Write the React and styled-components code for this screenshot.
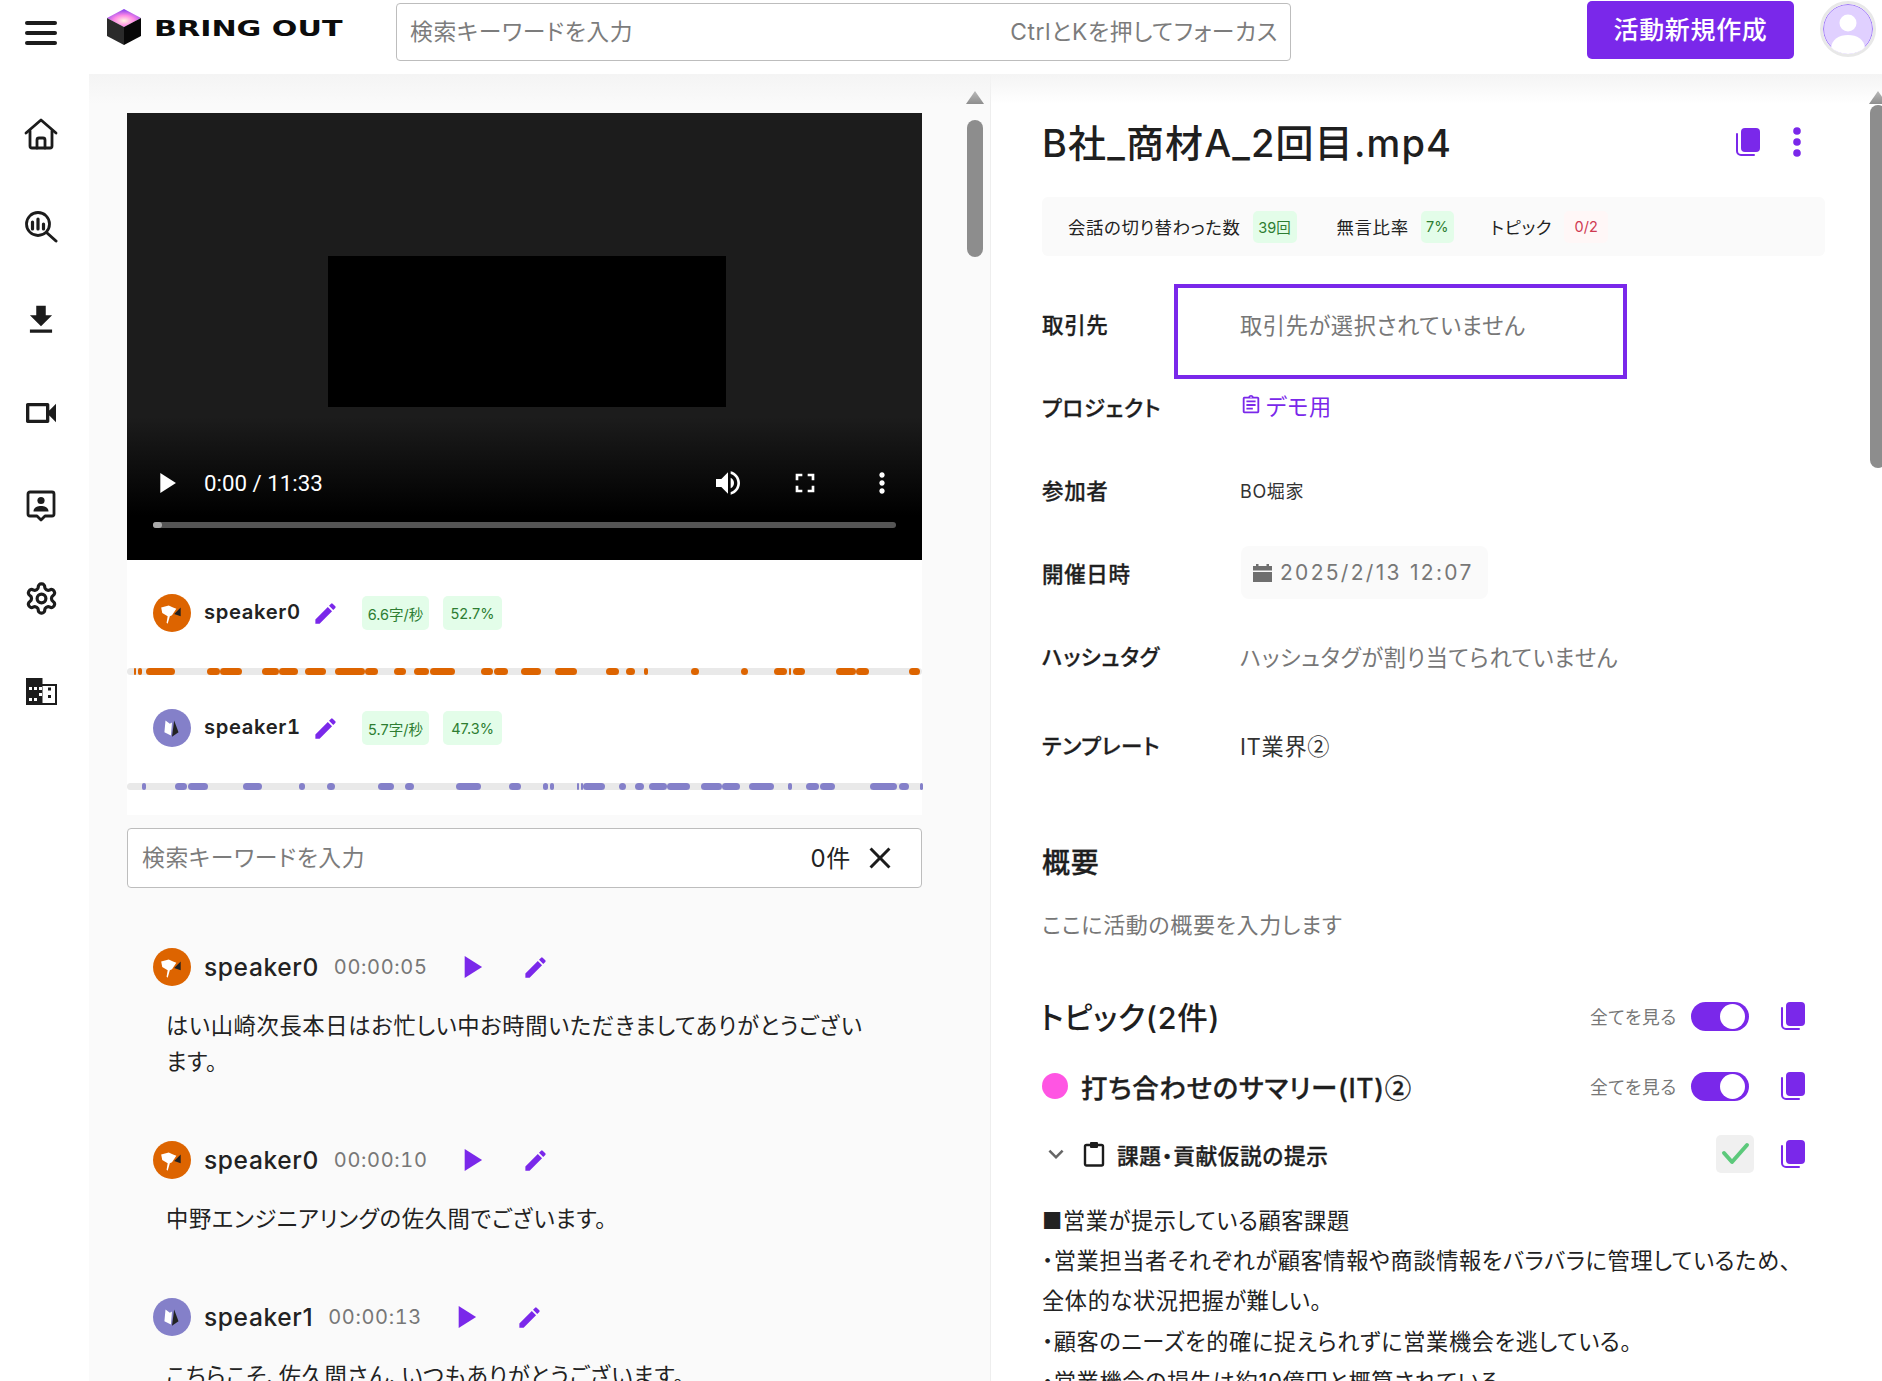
import React from "react";
import styled, { createGlobalStyle } from "styled-components";
import {
  MdDownload,
  MdOutlineVideocam,
  MdEdit,
  MdMoreVert,
  MdVolumeUp,
  MdFullscreen,
  MdPlayArrow,
  MdClose,
  MdExpandMore,
  MdOutlineAssignment,
} from "react-icons/md";
import { LuSettings } from "react-icons/lu";

const PURPLE = "#7a28ea";
const ORANGE = "#dd6400";
const VIOLET = "#8480c9";

const GlobalStyle = createGlobalStyle`
  html, body {
    margin: 0;
    padding: 0;
    background: #fff;
    overflow: hidden;
  }
  body {
    font-family: Inter, "Noto Sans CJK JP", "Noto Sans", sans-serif;
    font-feature-settings: "palt";
    letter-spacing: 0.04em;
    color: #222;
  }
  * { box-sizing: border-box; }
`;

const Shell = styled.div`
  display: flex;
  width: 1882px;
  height: 1381px;
  overflow: hidden;
`;

const Sidebar = styled.nav`
  width: 89px;
  flex: none;
  display: flex;
  flex-direction: column;
  align-items: center;
  padding: 14px 7px 0 0;
  background: #fff;
  position: relative;
  z-index: 3;
`;

const MenuButton = styled.div`
  width: 32px;
  height: 38px;
  margin-bottom: 35px;
  display: flex;
  flex-direction: column;
  justify-content: center;
  gap: 6px;
  span {
    display: block;
    height: 4px;
    border-radius: 2px;
    background: #1c1c1c;
  }
`;

const NavItem = styled.div`
  height: 93px;
  display: flex;
  align-items: center;
  justify-content: center;
  color: #1c1c1c;
  font-size: 36px;
  svg { display: block; }
`;

const Column = styled.div`
  flex: 1;
  min-width: 0;
  display: flex;
  flex-direction: column;
`;

const Header = styled.header`
  height: 74px;
  flex: none;
  display: flex;
  background: #fff;
  align-items: flex-start;
  position: relative;
`;

const Logo = styled.div`
  width: 307px;
  padding: 9px 0 0 18px;
  display: flex;
  align-items: center;
  gap: 13px;
`;

const LogoText = styled.span`
  display: inline-block;
  font-family: "DejaVu Sans", sans-serif;
  font-weight: 700;
  font-size: 22px;
  letter-spacing: 0;
  line-height: 24px;
  white-space: nowrap;
  transform: scaleX(1.37);
  transform-origin: left center;
  color: #0c0c0c;
  position: relative;
  top: 2px;
`;

const SearchBar = styled.div`
  width: 895px;
  height: 58px;
  margin-top: 3px;
  border: 1px solid #bdbdbd;
  border-radius: 4px;
  display: flex;
  align-items: center;
  justify-content: space-between;
  padding: 0 12px 4px 13px;
  font-size: 22.8px;
  color: #7c7c7c;
`;

const CreateButton = styled.div`
  margin: 1px 0 0 296px;
  width: 207px;
  height: 58px;
  border-radius: 5px;
  background: ${PURPLE};
  color: #fff;
  font-size: 25px;
  font-weight: 500;
  padding-bottom: 4px;
  display: flex;
  align-items: center;
  justify-content: center;
`;

const UserAvatar = styled.div`
  width: 56px;
  height: 56px;
  margin: 1px 0 0 26px;
  border-radius: 50%;
  border: 3px solid #e8e8e8;
  overflow: hidden;
  flex: none;
  svg { display: block; }
`;

const Panes = styled.div`
  flex: 1;
  min-height: 0;
  display: flex;
  position: relative;
  &::after {
    content: "";
    position: absolute;
    left: 0;
    right: 0;
    top: 0;
    height: 30px;
    background: linear-gradient(#f4f4f4, rgba(255, 255, 255, 0));
    pointer-events: none;
  }
`;

const LeftPane = styled.section`
  width: 901px;
  flex: none;
  position: relative;
  overflow: hidden;
  background: #fafafa;
  padding: 39px 0 0 38px;
`;

const RightPane = styled.section`
  flex: 1;
  min-width: 0;
  position: relative;
  overflow: hidden;
  background: #fff;
  border-left: 1px solid #eeeeee;
  padding: 33px 0 0 51px;
`;

const ScrollTrack = styled.div`
  position: absolute;
  top: 0;
  bottom: 0;
  right: ${(p) => p.$right}px;
  width: 20px;
`;

const ScrollArrow = styled.div`
  position: absolute;
  top: 17px;
  left: 1px;
  width: 18px;
  height: 13px;
  background: #8d8d8d;
  clip-path: polygon(50% 0, 100% 100%, 0 100%);
`;

const ScrollThumb = styled.div`
  position: absolute;
  top: ${(p) => p.$top}px;
  height: ${(p) => p.$height}px;
  left: 2px;
  width: 16px;
  border-radius: 8px;
  background: #8d8d8d;
`;

const Video = styled.div`
  width: 795px;
  height: 447px;
  position: relative;
  background: linear-gradient(#1c1c1c 0, #1c1c1c 68%, #000 90%);
  display: flex;
  justify-content: center;
  color: #fff;
`;

const VideoFrame = styled.div`
  width: 398px;
  height: 151px;
  margin: 143px 0 0 4px;
  background: #000;
`;

const VideoControls = styled.div`
  position: absolute;
  left: 26px;
  right: 26px;
  bottom: 32px;
`;

const ControlRow = styled.div`
  height: 40px;
  display: flex;
  align-items: center;
  font-family: Roboto, sans-serif;
  font-size: 22.3px;
  letter-spacing: 0;
  margin-bottom: 19px;
  svg { display: block; flex: none; }
`;

const VideoPlay = styled.span`
  display: flex;
  margin-left: -4px;
  font-size: 34px;
`;

const TimeText = styled.span`
  margin: 0 auto 0 21px;
`;

const ControlIcon = styled.div`
  width: 77px;
  display: flex;
  justify-content: center;
  font-size: 32px;
  position: relative;
  left: 24px;
`;

const Progress = styled.div`
  height: 6px;
  border-radius: 3px;
  background: #555;
  position: relative;
  &::before {
    content: "";
    position: absolute;
    left: 0;
    top: 0;
    width: 9px;
    height: 6px;
    border-radius: 3px;
    background: #aaa;
  }
`;

const SpeakerPanel = styled.div`
  width: 795px;
  height: 255px;
  background: #fff;
  padding-top: 34px;
`;

const SpeakerRow = styled.div`
  display: flex;
  align-items: center;
  height: 38px;
  padding-left: 26px;
`;

const Avatar = styled.div`
  width: 38px;
  height: 38px;
  border-radius: 50%;
  background: ${(p) => p.$color};
  flex: none;
  display: flex;
  align-items: center;
  justify-content: center;
  svg { display: block; }
`;

const SpeakerName = styled.span`
  margin-left: 13px;
  font-size: 20.2px;
  font-weight: 600;
  font-variant-numeric: tabular-nums;
  width: 108px;
  padding-bottom: 3px;
`;

const EditIcon = styled.span`
  display: flex;
  color: ${PURPLE};
  font-size: ${(p) => p.$size || 27}px;
`;

const Badge = styled.span`
  display: inline-flex;
  align-items: center;
  justify-content: center;
  padding: 0 ${(p) => p.$pad ?? 6}px;
  width: ${(p) => (p.$width ? `${p.$width}px` : "auto")};
  height: ${(p) => p.$height || 34}px;
  border-radius: 5px;
  font-size: 14.5px;
  letter-spacing: 0;
  color: ${(p) => (p.$red ? "#cf3a52" : "#2e7d32")};
  background: ${(p) => (p.$red ? "#fff7f7" : "#e3fde9")};
  flex: none;
`;

const SpeakerBadges = styled.div`
  display: flex;
  gap: 14px;
  margin-left: 23px;
`;

const Timeline = styled.div`
  height: 7px;
  border-radius: 4px;
  background: #e9e9e9;
  position: relative;
  margin: 36px 0 34px;
`;

const Segment = styled.span`
  position: absolute;
  top: 0;
  bottom: 0;
  border-radius: 4px;
  background: ${(p) => p.$color};
`;

const FindBox = styled.div`
  width: 795px;
  height: 60px;
  margin-top: 13px;
  border: 1px solid #bdbdbd;
  border-radius: 4px;
  background: #fff;
  display: flex;
  align-items: center;
  padding: 0 24px 4px 14px;
  font-size: 22.8px;
  color: #7c7c7c;
`;

const FindCount = styled.span`
  margin-left: auto;
  color: #222;
  font-size: 24px;
`;

const FindClose = styled.span`
  display: flex;
  margin: 4px -1px 0 11px;
  font-size: 36px;
  color: #1c1c1c;
`;

const Transcript = styled.div`
  width: 795px;
  padding: 60px 0 0 26px;
`;

const Utterance = styled.article`
  margin-bottom: 61px;
`;

const UtteranceHead = styled.div`
  display: flex;
  align-items: center;
  height: 38px;
`;

const UtteranceName = styled.span`
  margin-left: 13px;
  font-size: 24.5px;
  font-weight: 500;
`;

const Stamp = styled.span`
  margin-left: 15px;
  font-size: 20px;
  font-variant-numeric: tabular-nums;
  color: #777;
`;

const PlayIcon = styled.span`
  display: flex;
  color: ${PURPLE};
  font-size: 38px;
  margin: 0 32px 0 24px;
`;

const UtteranceText = styled.p`
  margin: 22px 0 0 13px;
  width: 705px;
  font-size: 22.3px;
  line-height: 36px;
  color: #222;
`;

const TitleRow = styled.div`
  width: 780px;
  height: 66px;
  display: flex;
  align-items: center;
  color: #1f1f1f;
`;

const Title = styled.h1`
  margin: 0 auto 0 0;
  font-size: 38px;
  letter-spacing: 0.03em;
  font-weight: 500;
  white-space: nowrap;
`;

const TitleActions = styled.div`
  display: flex;
  align-items: center;
  gap: 33px;
  padding: 4px 21px 0 0;
  color: ${PURPLE};
  svg { display: block; }
`;

const StatStrip = styled.div`
  width: 783px;
  height: 59px;
  margin-top: 24px;
  border-radius: 6px;
  background: #fafafa;
  display: flex;
  align-items: center;
  padding-left: 26px;
  font-size: 17.4px;
`;

const StatLabel = styled.span`
  margin-left: ${(p) => p.$left || 0}px;
  margin-right: 12px;
`;

const Fields = styled.div`
  margin-top: 26px;
`;

const FieldRow = styled.div`
  display: grid;
  grid-template-columns: 198px 1fr;
  align-items: center;
  height: 83px;
  margin-bottom: ${(p) => p.$gap || 0}px;
`;

const FieldLabel = styled.span`
  font-size: 21.5px;
  font-weight: 500;
  -webkit-text-stroke: 0.3px #1f1f1f;
  color: #1f1f1f;
`;

const FieldValue = styled.div`
  position: relative;
  font-size: ${(p) => p.$size || 22.2}px;
  color: ${(p) => p.$color || "#777"};
  display: flex;
  align-items: center;
`;

const FocusRing = styled.div`
  position: absolute;
  left: -66px;
  top: -24px;
  width: 453px;
  height: 95px;
  border: 4px solid ${PURPLE};
`;

const ProjectLink = styled.span`
  color: ${PURPLE};
  display: flex;
  align-items: center;
  gap: 4px;
  margin-top: -3px;
  svg { display: block; font-size: 22px; }
`;

const DateChip = styled.div`
  width: 247px;
  height: 53px;
  margin-left: 1px;
  background: #fafafa;
  border-radius: 8px;
  display: flex;
  align-items: center;
  gap: 8px;
  padding-left: 12px;
  letter-spacing: 2.3px;
  font-size: 21px;
  color: #777;
  svg { display: block; }
`;

const Circled = styled.span`
  font-family: "Noto Sans CJK JP", sans-serif;
`;

const SectionTitle = styled.h2`
  margin: 57px 0 0;
  font-size: 28px;
  font-weight: 500;
  -webkit-text-stroke: 0.3px #1f1f1f;
  line-height: 40px;
  color: #1f1f1f;
`;

const Placeholder = styled.p`
  margin: 22px 0 0;
  font-size: 22px;
  line-height: 40px;
  color: #777;
`;

const HeadRow = styled.div`
  width: 763px;
  display: flex;
  align-items: center;
  height: ${(p) => p.$height}px;
  margin-top: ${(p) => p.$top || 0}px;
`;

const TopicsTitle = styled.h2`
  margin: 0 auto 0 -2px;
  font-size: 30.5px;
  font-weight: 500;
  color: #1f1f1f;
`;

const TopicDot = styled.span`
  width: 26px;
  height: 26px;
  border-radius: 50%;
  background: #ff55e3;
  flex: none;
  margin-right: 13px;
`;

const TopicName = styled.h3`
  margin: 0 auto 0 0;
  font-size: 26.5px;
  font-weight: 500;
  -webkit-text-stroke: 0.3px #1f1f1f;
  color: #1f1f1f;
`;

const SeeAll = styled.span`
  font-size: 17.8px;
  color: #777;
  margin-right: 14px;
`;

const Toggle = styled.span`
  width: 58px;
  height: 29px;
  border-radius: 15px;
  background: ${PURPLE};
  padding: 2px 4px;
  display: flex;
  justify-content: flex-end;
  margin-right: 32px;
  &::after {
    content: "";
    width: 25px;
    height: 25px;
    border-radius: 50%;
    background: #fff;
  }
`;

const CopyWrap = styled.span`
  display: flex;
  color: ${PURPLE};
  svg { display: block; }
`;

const Chevron = styled.span`
  display: flex;
  margin: 0 12px 0 -1px;
  color: #666;
  font-size: 30px;
`;

const SubTitle = styled.h4`
  margin: 0 auto 0 12px;
  font-size: 21.7px;
  font-weight: 500;
  -webkit-text-stroke: 0.3px #1f1f1f;
  color: #1f1f1f;
`;

const CheckBox = styled.span`
  width: 38px;
  height: 38px;
  border-radius: 5px;
  background: #f0f0f0;
  display: flex;
  margin-right: 27px;
  svg { display: block; }
`;

const Body = styled.div`
  width: 760px;
  margin-top: 25px;
  font-size: 22.2px;
  line-height: 40.2px;
  color: #222;
`;

const CopyIcon = () => (
  <svg width="24" height="28" viewBox="0 0 24 28" fill="currentColor">
    <rect x="5" y="0" width="19" height="24" rx="4" />
    <path d="M1 6v17a4 4 0 0 0 4 4h13" fill="none" stroke="currentColor" strokeWidth="2" strokeLinecap="round" />
  </svg>
);

const DotsIcon = () => (
  <svg width="8" height="30" viewBox="0 0 8 30" fill="currentColor">
    <circle cx="4" cy="4" r="3.800" />
    <circle cx="4" cy="15" r="3.800" />
    <circle cx="4" cy="26" r="3.800" />
  </svg>
);

const CubeLogo = () => (
  <svg width="34" height="36" viewBox="0 0 34 36">
    <defs>
      <radialGradient id="cubeTop" cx="50%" cy="65%" r="65%">
        <stop offset="0" stopColor="#fff6e0" />
        <stop offset="0.45" stopColor="#ff8ae6" />
        <stop offset="1" stopColor="#7c3df0" />
      </radialGradient>
    </defs>
    <polygon points="17,0 34,9 17,18 0,9" fill="url(#cubeTop)" />
    <polygon points="0,9 17,18 17,36 0,27" fill="#2a2a2a" />
    <polygon points="34,9 17,18 17,36 34,27" fill="#080808" />
  </svg>
);

const HomeIcon = () => (
  <svg width="34" height="34" viewBox="0 0 34 34" fill="none" stroke="currentColor" strokeWidth="2.8" strokeLinejoin="round" strokeLinecap="round">
    <path d="M2 16 17 3l15 13" />
    <path d="M6 14v15a2 2 0 0 0 2 2h18a2 2 0 0 0 2-2V14" />
    <path d="M13 31v-8a2 2 0 0 1 2-2h4a2 2 0 0 1 2 2v8" />
  </svg>
);

const AnalyticsIcon = () => (
  <svg width="34" height="34" viewBox="0 0 34 34" fill="none" stroke="currentColor" strokeLinecap="round">
    <circle cx="14" cy="14" r="11.500" strokeWidth="2.8" />
    <path d="M22.500 22.500 32 31" strokeWidth="3" />
    <path d="M8.500 12v7M14 9v10M19.500 14v5" strokeWidth="3.200" />
  </svg>
);

const ContactIcon = () => (
  <svg width="30" height="34" viewBox="0 0 30 34" fill="none" stroke="currentColor">
    <path d="M4 3h22a2 2 0 0 1 2 2v20a2 2 0 0 1-2 2h-7l-4 4-4-4H4a2 2 0 0 1-2-2V5a2 2 0 0 1 2-2Z" strokeWidth="2.8" strokeLinejoin="round" />
    <circle cx="15" cy="11.500" r="3.600" fill="currentColor" stroke="none" />
    <path d="M7.500 22.500c0-4 3.500-5.500 7.500-5.500s7.500 1.500 7.500 5.500Z" fill="currentColor" stroke="none" />
  </svg>
);

const BuildingIcon = () => (
  <svg width="31" height="27" viewBox="0 0 31 27">
    <rect x="0" y="0" width="16.500" height="27" fill="#1c1c1c" />
    <path d="M16 7h14v19H16" fill="none" stroke="#1c1c1c" strokeWidth="2" />
    <g fill="#fff">
      <rect x="3" y="9" width="3" height="3" />
      <rect x="8" y="9" width="3" height="3" />
      <rect x="3" y="20" width="3" height="3" />
      <rect x="8" y="20" width="3" height="3" />
      <rect x="13" y="9" width="3" height="3" />
      <rect x="13" y="15" width="3" height="3" />
    </g>
    <g fill="#1c1c1c">
      <rect x="22" y="9.500" width="3" height="3" />
      <rect x="22" y="17" width="3" height="3" />
    </g>
  </svg>
);

const ClipboardIcon = () => (
  <svg width="22" height="26" viewBox="0 0 22 26" fill="none" stroke="#1c1c1c" strokeWidth="2.400">
    <rect x="2" y="4" width="18" height="20.500" rx="1.500" />
    <rect x="7" y="1" width="8" height="6" rx="1" fill="#1c1c1c" stroke="none" />
  </svg>
);

const CalendarIcon = () => (
  <svg width="19" height="18" viewBox="0 0 19 18" fill="#6f6f6f">
    <rect x="3" y="0" width="2.500" height="3" />
    <rect x="13.500" y="0" width="2.500" height="3" />
    <rect x="0" y="2" width="19" height="4.500" />
    <rect x="0" y="8" width="19" height="10" />
  </svg>
);

const CheckIcon = () => (
  <svg width="38" height="38" viewBox="0 0 38 38" fill="none" stroke="#5cc97b" strokeWidth="4" strokeLinecap="round" strokeLinejoin="round">
    <path d="M8 18l8 9 15-17" />
  </svg>
);

const SpeakerGlyph = ({ variant }) =>
  variant === 0 ? (
    <svg width="26" height="26" viewBox="0 0 24 24">
      <path d="M2 7l7-2 4 2 3 1-4 6-2 1-2 7-1-1 1-6-5-3Z" fill="#fff" />
      <path d="M14 13l6-6v8Z" fill="#222" />
    </svg>
  ) : (
    <svg width="26" height="26" viewBox="0 0 24 24">
      <path d="M6 5l4 3 2-1-1 12-6-3Z" fill="#fff" />
      <path d="M14 5l4 11-6 4Z" fill="#222" />
    </svg>
  );

// positions are in px of the 1519 wide source track
const orangeSegments = [
  [26, 31], [34, 42], [49, 105], [166, 190], [190, 232], [271, 304], [304, 340],
  [354, 393], [410, 467], [467, 493], [524, 546], [562, 590], [592, 640], [690, 712],
  [714, 741], [765, 805], [830, 872], [928, 953], [967, 984], [1000, 1009], [1090, 1106],
  [1186, 1200], [1249, 1274], [1278, 1282], [1285, 1309], [1367, 1405], [1405, 1430], [1507, 1529],
];

const violetSegments = [
  [42, 50], [105, 128], [130, 168], [235, 271], [341, 353], [396, 411], [493, 524],
  [545, 562], [641, 690], [742, 765], [807, 818], [822, 829], [872, 876], [880, 884],
  [885, 927], [953, 967], [983, 1000], [1011, 1045], [1045, 1089], [1109, 1150], [1150, 1185],
  [1201, 1249], [1276, 1283], [1310, 1335], [1337, 1366], [1433, 1485], [1489, 1507], [1528, 1533],
];

const speakers = [
  { name: "speaker0", color: ORANGE, rate: "6.6字/秒", share: "52.7%", segments: orangeSegments, variant: 0 },
  { name: "speaker1", color: VIOLET, rate: "5.7字/秒", share: "47.3%", segments: violetSegments, variant: 1 },
];

const utterances = [
  { name: "speaker0", time: "00:00:05", variant: 0, text: "はい山崎次長本日はお忙しい中お時間いただきましてありがとうございます。" },
  { name: "speaker0", time: "00:00:10", variant: 0, text: "中野エンジニアリングの佐久間でございます。" },
  { name: "speaker1", time: "00:00:13", variant: 1, text: "こちらこそ、佐久間さん、いつもありがとうございます。" },
];

const Track = ({ segments, color }) => (
  <Timeline>
    {segments.map(([from, to]) => (
      <Segment
        key={from}
        $color={color}
        style={{ left: `${((from - 13) / 1519) * 100}%`, width: `${((to - from) / 1519) * 100}%` }}
      />
    ))}
  </Timeline>
);

const App = () => (
  <Shell>
    <GlobalStyle />
    <Sidebar>
      <MenuButton>
        <span />
        <span />
        <span />
      </MenuButton>
      <NavItem><HomeIcon /></NavItem>
      <NavItem><AnalyticsIcon /></NavItem>
      <NavItem><MdDownload size={38} /></NavItem>
      <NavItem><MdOutlineVideocam size={40} /></NavItem>
      <NavItem><ContactIcon /></NavItem>
      <NavItem><LuSettings size={35} strokeWidth={2.2} /></NavItem>
      <NavItem><BuildingIcon /></NavItem>
    </Sidebar>
    <Column>
      <Header>
        <Logo>
          <CubeLogo />
          <LogoText>BRING OUT</LogoText>
        </Logo>
        <SearchBar>
          <span>検索キーワードを入力</span>
          <span>CtrlとKを押してフォーカス</span>
        </SearchBar>
        <CreateButton>活動新規作成</CreateButton>
        <UserAvatar>
          <svg width="50" height="50" viewBox="0 0 50 50">
            <circle cx="25" cy="25" r="24.500" fill="#e0d0ff" stroke="#a07cf5" strokeWidth="1" />
            <circle cx="25" cy="19" r="8.500" fill="#fff" />
            <path d="M8 44c1-9 8-13 17-13s16 4 17 13a24 24 0 0 1-34 0Z" fill="#fff" />
          </svg>
        </UserAvatar>
      </Header>
      <Panes>
        <LeftPane>
          <Video>
            <VideoFrame />
            <VideoControls>
              <ControlRow>
                <VideoPlay><MdPlayArrow /></VideoPlay>
                <TimeText>0:00 / 11:33</TimeText>
                <ControlIcon><MdVolumeUp /></ControlIcon>
                <ControlIcon><MdFullscreen /></ControlIcon>
                <ControlIcon><MdMoreVert /></ControlIcon>
              </ControlRow>
              <Progress />
            </VideoControls>
          </Video>
          <SpeakerPanel>
            {speakers.map((s) => (
              <React.Fragment key={s.name}>
                <SpeakerRow>
                  <Avatar $color={s.color}><SpeakerGlyph variant={s.variant} /></Avatar>
                  <SpeakerName>{s.name}</SpeakerName>
                  <EditIcon><MdEdit /></EditIcon>
                  <SpeakerBadges>
                    <Badge $width={67} $pad={0}>{s.rate}</Badge>
                    <Badge $width={59} $pad={0}>{s.share}</Badge>
                  </SpeakerBadges>
                </SpeakerRow>
                <Track segments={s.segments} color={s.color} />
              </React.Fragment>
            ))}
          </SpeakerPanel>
          <FindBox>
            <span>検索キーワードを入力</span>
            <FindCount>0件</FindCount>
            <FindClose><MdClose /></FindClose>
          </FindBox>
          <Transcript>
            {utterances.map((u) => (
              <Utterance key={u.time}>
                <UtteranceHead>
                  <Avatar $color={u.variant === 0 ? ORANGE : VIOLET}><SpeakerGlyph variant={u.variant} /></Avatar>
                  <UtteranceName>{u.name}</UtteranceName>
                  <Stamp>{u.time}</Stamp>
                  <PlayIcon><MdPlayArrow /></PlayIcon>
                  <EditIcon><MdEdit /></EditIcon>
                </UtteranceHead>
                <UtteranceText>{u.text}</UtteranceText>
              </Utterance>
            ))}
          </Transcript>
          <ScrollTrack $right={5}>
            <ScrollArrow />
            <ScrollThumb $top={46} $height={137} />
          </ScrollTrack>
        </LeftPane>
        <RightPane>
          <TitleRow>
            <Title>B社_商材A_2回目.mp4</Title>
            <TitleActions>
              <CopyIcon />
              <DotsIcon />
            </TitleActions>
          </TitleRow>
          <StatStrip>
            <StatLabel>会話の切り替わった数</StatLabel>
            <Badge $height={32} $width={44} $pad={0}>39回</Badge>
            <StatLabel $left={40}>無言比率</StatLabel>
            <Badge $height={32} $width={33} $pad={0}>7%</Badge>
            <StatLabel $left={37}>トピック</StatLabel>
            <Badge $height={32} $red $width={44} $pad={0}>0/2</Badge>
          </StatStrip>
          <Fields>
            <FieldRow>
              <FieldLabel>取引先</FieldLabel>
              <FieldValue>
                <FocusRing />
                取引先が選択されていません
              </FieldValue>
            </FieldRow>
            <FieldRow>
              <FieldLabel>プロジェクト</FieldLabel>
              <FieldValue>
                <ProjectLink><MdOutlineAssignment />デモ用</ProjectLink>
              </FieldValue>
            </FieldRow>
            <FieldRow>
              <FieldLabel>参加者</FieldLabel>
              <FieldValue $size={18} $color="#333">BO堀家</FieldValue>
            </FieldRow>
            <FieldRow>
              <FieldLabel>開催日時</FieldLabel>
              <FieldValue>
                <DateChip><CalendarIcon />2025/2/13 12:07</DateChip>
              </FieldValue>
            </FieldRow>
            <FieldRow $gap={6}>
              <FieldLabel>ハッシュタグ</FieldLabel>
              <FieldValue>ハッシュタグが割り当てられていません</FieldValue>
            </FieldRow>
            <FieldRow>
              <FieldLabel>テンプレート</FieldLabel>
              <FieldValue $color="#333">IT業界<Circled>②</Circled></FieldValue>
            </FieldRow>
          </Fields>
          <SectionTitle>概要</SectionTitle>
          <Placeholder>ここに活動の概要を入力します</Placeholder>
          <HeadRow $height={44} $top={49}>
            <TopicsTitle>トピック(2件)</TopicsTitle>
            <SeeAll>全てを見る</SeeAll>
            <Toggle />
            <CopyWrap><CopyIcon /></CopyWrap>
          </HeadRow>
          <HeadRow $height={44} $top={26}>
            <TopicDot />
            <TopicName>打ち合わせのサマリー(IT)<Circled>②</Circled></TopicName>
            <SeeAll>全てを見る</SeeAll>
            <Toggle />
            <CopyWrap><CopyIcon /></CopyWrap>
          </HeadRow>
          <HeadRow $height={44} $top={24}>
            <Chevron><MdExpandMore /></Chevron>
            <ClipboardIcon />
            <SubTitle>課題・貢献仮説の提示</SubTitle>
            <CheckBox><CheckIcon /></CheckBox>
            <CopyWrap><CopyIcon /></CopyWrap>
          </HeadRow>
          <Body>
            ■営業が提示している顧客課題
            <br />
            ・営業担当者それぞれが顧客情報や商談情報をバラバラに管理しているため、全体的な状況把握が難しい。
            <br />
            ・顧客のニーズを的確に捉えられずに営業機会を逃している。
            <br />
            ・営業機会の損失は約10億円と概算されている。
          </Body>
          <ScrollTrack $right={-6}>
            <ScrollArrow />
            <ScrollThumb $top={31} $height={363} />
          </ScrollTrack>
        </RightPane>
      </Panes>
    </Column>
  </Shell>
);

export default App;
